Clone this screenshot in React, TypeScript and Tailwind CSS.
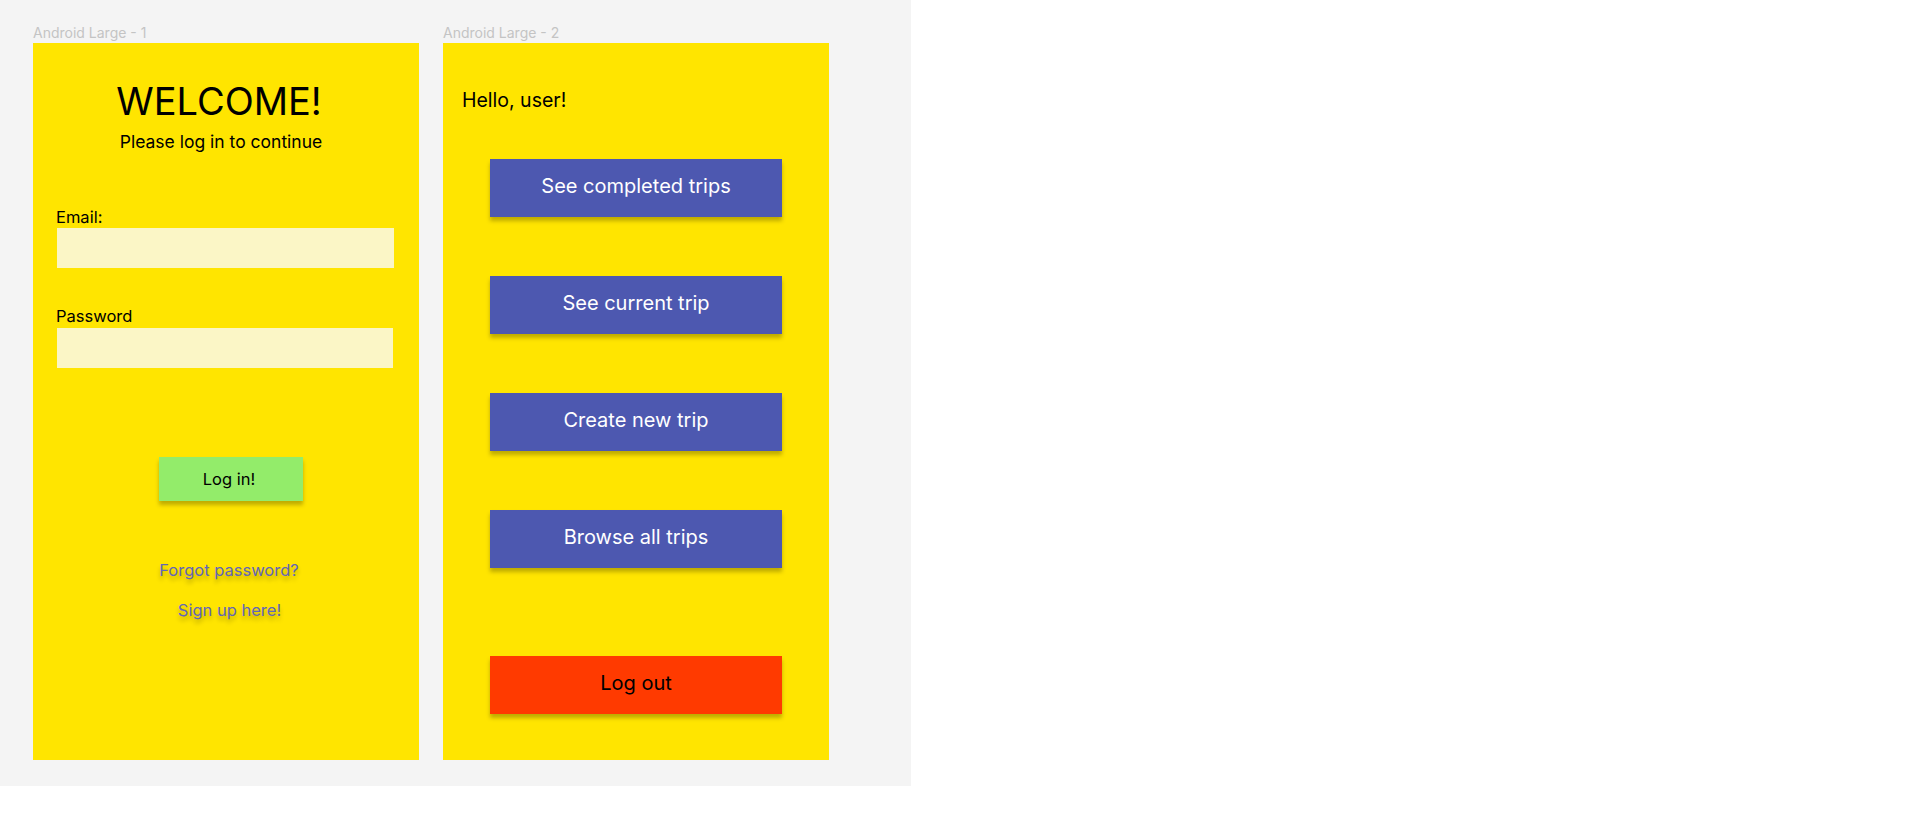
import React from "react";

const font = { fontFamily: "Inter, 'Noto Sans', sans-serif" };

function NavButton({ label, className = "" }: { label: string; className?: string }) {
  return (
    <div
      className={`ml-[47px] flex h-[58px] w-[292px] items-center justify-center bg-[#4d58b0] pb-[4px] text-[20px] leading-none text-white shadow-[0_4px_4px_rgba(0,0,0,0.25)] ${className}`}
    >
      {label}
    </div>
  );
}

export default function App() {
  return (
    <div className="min-h-[829px] w-full bg-white" style={font}>
      <div className="flex h-[786px] w-[911px] gap-[24px] bg-[#f4f4f4] pl-[33px] pt-[26px]">
        {/* Frame 1 */}
        <div className="flex flex-col">
          <div className="h-[17px] text-[14px] leading-[14px] text-[#c4c4c4]">Android Large - 1</div>
          <div className="flex h-[717px] w-[386px] flex-col bg-[#ffe500]">
            <div className="mt-[39px] pr-[14px] text-center text-[38px] leading-none text-black">WELCOME!</div>
            <div className="mt-[13px] pr-[10px] text-center text-[17.5px] leading-[18px] text-black">
              Please log in to continue
            </div>
            <div className="ml-[23px] mt-[58px] text-[16.5px] leading-[16px] text-black">Email:</div>
            <div className="ml-[24px] mt-[3px] h-[40px] w-[337px] bg-[#fbf6c6]" />
            <div className="ml-[23px] mt-[40px] text-[16.5px] leading-[16px] text-black">Password</div>
            <div className="ml-[24px] mt-[4px] h-[40px] w-[336px] bg-[#fbf6c6]" />
            <div className="ml-[126px] mt-[89px] flex w-[144px] flex-col items-center">
              <div className="flex h-[44px] w-[144px] items-center justify-center bg-[#93ec6a] pr-[4px] text-[16.5px] leading-none text-black shadow-[0_4px_4px_rgba(0,0,0,0.25)]">
                Log in!
              </div>
              <div className="mr-[4px] mt-[61px] whitespace-nowrap text-[16.5px] leading-none text-[#6366b8] [text-shadow:0_4px_4px_rgba(0,0,0,0.25)]">
                Forgot password?
              </div>
              <div className="mr-[3px] mt-[23px] whitespace-nowrap text-[16.5px] leading-none text-[#6366b8] [text-shadow:0_4px_4px_rgba(0,0,0,0.25)]">
                Sign up here!
              </div>
            </div>
          </div>
        </div>
        {/* Frame 2 */}
        <div className="flex flex-col">
          <div className="h-[17px] text-[14px] leading-[14px] text-[#c4c4c4]">Android Large - 2</div>
          <div className="flex h-[717px] w-[386px] flex-col bg-[#ffe500]">
            <div className="ml-[19px] mt-[47px] text-[19.5px] leading-[20px] text-black">Hello, user!</div>
            <NavButton label="See completed trips" className="mt-[49px]" />
            <NavButton label="See current trip" className="mt-[59px]" />
            <NavButton label="Create new trip" className="mt-[59px]" />
            <NavButton label="Browse all trips" className="mt-[59px]" />
            <div className="ml-[47px] mt-[88px] flex h-[58px] w-[292px] items-center justify-center bg-[#ff3a00] pb-[4px] text-[20px] leading-none text-black shadow-[0_4px_4px_rgba(0,0,0,0.25)]">
              Log out
            </div>
          </div>
        </div>
      </div>
    </div>
  );
}
